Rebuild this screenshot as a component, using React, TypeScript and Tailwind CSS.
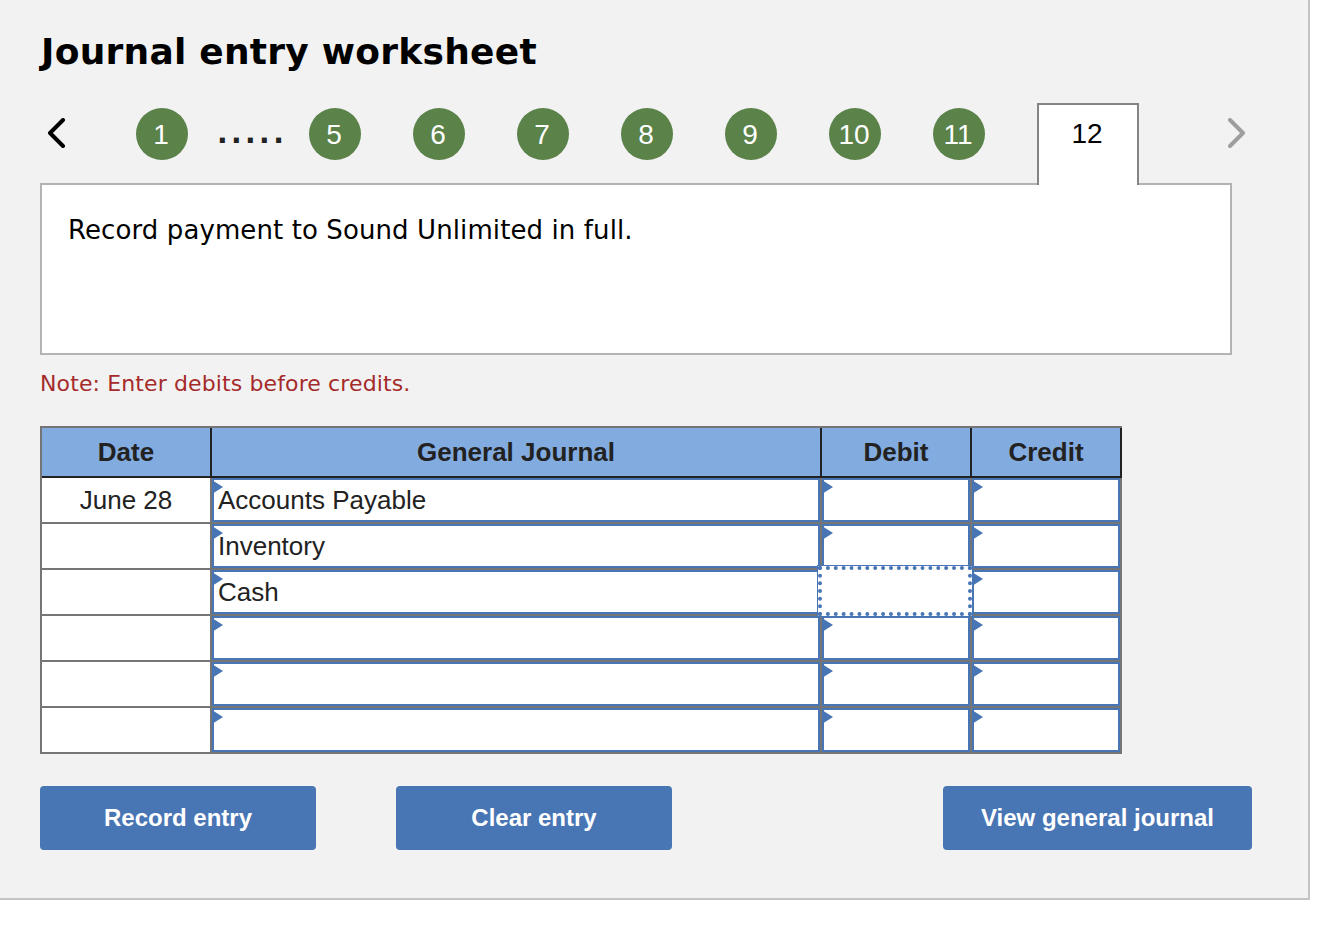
import React from "react";

const steps = ["5", "6", "7", "8", "9", "10", "11"];
const rows = ["Accounts Payable", "Inventory", "Cash", "", "", ""];

const StepCircle = ({ label }: { label: string }) => (
  <div className="flex h-[52px] w-[52px] shrink-0 items-center justify-center rounded-full bg-[#5a8249] pt-[1px] pr-[2px] text-[28px] text-white">
    {label}
  </div>
);

const Header = ({ label }: { label: string }) => (
  <div className="flex h-[50px] items-center justify-center border-r-2 border-b-2 border-[#222222] bg-[#82abe0] text-[26px] font-bold text-[#222222]">
    {label}
  </div>
);

const InputCell = ({ text, focused }: { text?: string; focused?: boolean }) => (
  <div className="relative h-[46px] border-r-2 border-b-2 border-[#757575]">
    <div className="h-full border-2 border-[#4875b4] bg-white pl-[4px] text-[26px] leading-[40px] text-[#222222]">
      {text}
    </div>
    <div className="absolute top-[2px] left-0 h-0 w-0 border-y-[7px] border-l-[11px] border-y-transparent border-l-[#4875b4]" />
    {focused && (
      <div className="absolute -top-[4px] -right-[2px] -bottom-[2px] -left-[4px] z-10 border-4 border-dotted border-[#4875b4] bg-white outline-1 outline-[#4875b4]" />
    )}
  </div>
);

const ActionButton = ({ label, className }: { label: string; className: string }) => (
  <button className={`h-[64px] rounded-[4px] bg-[#4875b4] text-[24px] font-bold text-white ${className}`}>
    {label}
  </button>
);

export default function App() {
  return (
    <div className="h-[934px] w-[1342px] bg-white font-['Liberation_Sans',Arial,sans-serif]">
      <div className="h-[900px] w-[1310px] border-r-2 border-b-2 border-[#c4c4c4] bg-[#f2f2f2] px-[40px] pt-[32px]">
        <h1 className="pl-[1px] font-['DejaVu_Sans',Verdana,sans-serif] text-[36px] leading-[40px] font-bold tracking-[0.25px] text-black">
          Journal entry worksheet
        </h1>

        <div className="relative z-10 mt-[31px] flex h-[80px] w-[1192px] items-start">
          <div className="mt-[15px] ml-[7px] flex w-[89px] shrink-0">
            <svg width="20" height="30" viewBox="0 0 20 30" fill="none" stroke="#000000" strokeWidth="4" strokeLinecap="round" strokeLinejoin="round">
              <path d="M16 2 L3 15 L16 28" />
            </svg>
          </div>
          <div className="mt-[5px] flex items-start">
            <StepCircle label="1" />
            <div className="ml-[29px] w-[92px] shrink-0 font-['DejaVu_Sans',Verdana,sans-serif] text-[28px] leading-[52px] font-bold tracking-[3.4px] text-[#222222]">
              .....
            </div>
            <div className="flex gap-[52px]">
              {steps.map((s) => (
                <StepCircle key={s} label={s} />
              ))}
            </div>
          </div>
          <div className="ml-[52px] flex h-[82px] w-[102px] shrink-0 justify-center border-x-2 border-t-2 border-[#858585] bg-white pt-[11px] pr-[2px] text-[28px] leading-[36px] text-black">
            12
          </div>
          <div className="mt-[15px] ml-[87px] shrink-0">
            <svg width="20" height="30" viewBox="0 0 20 30" fill="none" stroke="#9e9e9e" strokeWidth="4" strokeLinecap="round" strokeLinejoin="round">
              <path d="M4 2 L17 15 L4 28" />
            </svg>
          </div>
        </div>

        <div className="h-[172px] w-[1192px] border-2 border-[#b3b3b3] bg-white pt-[25px] pl-[26px] font-['DejaVu_Sans',Verdana,sans-serif] text-[26px] leading-[40px] tracking-[0.1px] text-black">
          Record payment to Sound Unlimited in full.
        </div>

        <p className="mt-[17px] font-['DejaVu_Sans',Verdana,sans-serif] text-[22px] leading-[24px] tracking-[0.12px] text-[#a52a2a]">
          Note: Enter debits before credits.
        </p>

        <div className="mt-[30px] grid w-[1082px] grid-cols-[170px_610px_150px_150px] border-t-2 border-l-2 border-[#757575]">
          <Header label="Date" />
          <Header label="General Journal" />
          <Header label="Debit" />
          <Header label="Credit" />
          {rows.map((text, i) => (
            <React.Fragment key={i}>
              <div className="h-[46px] border-r-2 border-b-2 border-[#757575] bg-white text-center text-[26px] leading-[44px] text-[#222222]">
                {i === 0 ? "June 28" : ""}
              </div>
              <InputCell text={text} />
              <InputCell focused={i === 2} />
              <InputCell />
            </React.Fragment>
          ))}
        </div>

        <div className="mt-[32px] flex w-[1212px]">
          <ActionButton label="Record entry" className="w-[276px]" />
          <ActionButton label="Clear entry" className="ml-[80px] w-[276px]" />
          <ActionButton label="View general journal" className="ml-auto w-[309px]" />
        </div>
      </div>
    </div>
  );
}
